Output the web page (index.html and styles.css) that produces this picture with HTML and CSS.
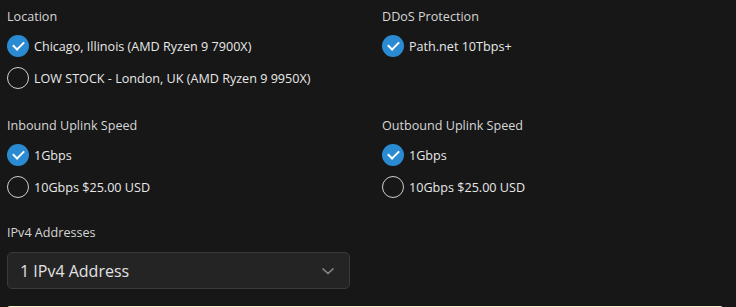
FILE: index.html
```html
<!DOCTYPE html>
<html lang="en">
  <head>
    <meta charset="UTF-8" />
    <meta name="viewport" content="width=device-width, initial-scale=1.0" />
    <title>Configure Server</title>
    <link rel="stylesheet" href="styles.css">
  </head>
  <body>
    <div class="config">
      <div class="config-grid">
        <div class="option-group">
          <div class="group-label">Location</div>
          <label class="option">
            <span class="radio checked"></span>
            <span>Chicago, Illinois (AMD Ryzen 9 7900X)</span>
          </label>
          <label class="option">
            <span class="radio"></span>
            <span>LOW STOCK - London, UK (AMD Ryzen 9 9950X)</span>
          </label>
        </div>
        <div class="option-group">
          <div class="group-label">DDoS Protection</div>
          <label class="option">
            <span class="radio checked"></span>
            <span>Path.net 10Tbps+</span>
          </label>
        </div>
        <div class="option-group">
          <div class="group-label">Inbound Uplink Speed</div>
          <label class="option">
            <span class="radio checked"></span>
            <span>1Gbps</span>
          </label>
          <label class="option">
            <span class="radio"></span>
            <span>10Gbps $25.00 USD</span>
          </label>
        </div>
        <div class="option-group">
          <div class="group-label">Outbound Uplink Speed</div>
          <label class="option">
            <span class="radio checked"></span>
            <span>1Gbps</span>
          </label>
          <label class="option">
            <span class="radio"></span>
            <span>10Gbps $25.00 USD</span>
          </label>
        </div>
        <div class="option-group select-group">
          <div class="group-label select-label">IPv4 Addresses</div>
          <div class="select">
            <span>1 IPv4 Address</span>
            <svg class="chevron" width="14" height="8" viewBox="0 0 14 8">
              <path d="M1.5 1.5 L7 6.5 L12.5 1.5" fill="none" stroke="#8a8a8a" stroke-width="1.6" />
            </svg>
          </div>
        </div>
      </div>
      <div class="notice"></div>
    </div>
  </body>
</html>
```
FILE: styles.css
```css
body {
  margin: 0;
  background-color: #171717;
  font-family: "Open Sans", "Noto Sans", Arial, sans-serif;
  color: #e4e4e4;
}
.config {
  padding: 7px 7px 0 7px;
}
.config-grid {
  display: grid;
  grid-template-columns: 375px 1fr;
  row-gap: 22px;
}
.group-label {
  font-size: 12.6px;
  line-height: 20px;
  color: #d6d6d6;
  margin-bottom: 3px;
}
.select-group {
  margin-top: -2px;
}
.select-label {
  margin-bottom: 9px;
}
.option {
  display: flex;
  align-items: center;
  height: 32px;
  font-size: 12.6px;
  color: #e8e8e8;
}
.radio {
  width: 22px;
  height: 22px;
  box-sizing: border-box;
  border: 1.5px solid #cfcfcf;
  border-radius: 50%;
  margin-right: 5px;
  flex-shrink: 0;
  position: relative;
}
.radio.checked {
  border: none;
  background-color: #2a8bd3;
}
.radio.checked::after {
  content: "";
  position: absolute;
  left: 6px;
  top: 6px;
  width: 9px;
  height: 5px;
  border-left: 2.5px solid #fff;
  border-bottom: 2.5px solid #fff;
  transform: rotate(-45deg);
}
.select {
  width: 343px;
  height: 37px;
  box-sizing: border-box;
  display: flex;
  align-items: center;
  justify-content: space-between;
  padding: 0 14px 0 12px;
  background-color: #242424;
  border: 1px solid #3a3a3a;
  border-radius: 5px;
  font-size: 16px;
  color: #e2e2e2;
}
.notice {
  margin-top: 17px;
  margin-right: 6px;
  height: 20px;
  background-color: #fdf1c6;
  border-radius: 3px;
}
```
